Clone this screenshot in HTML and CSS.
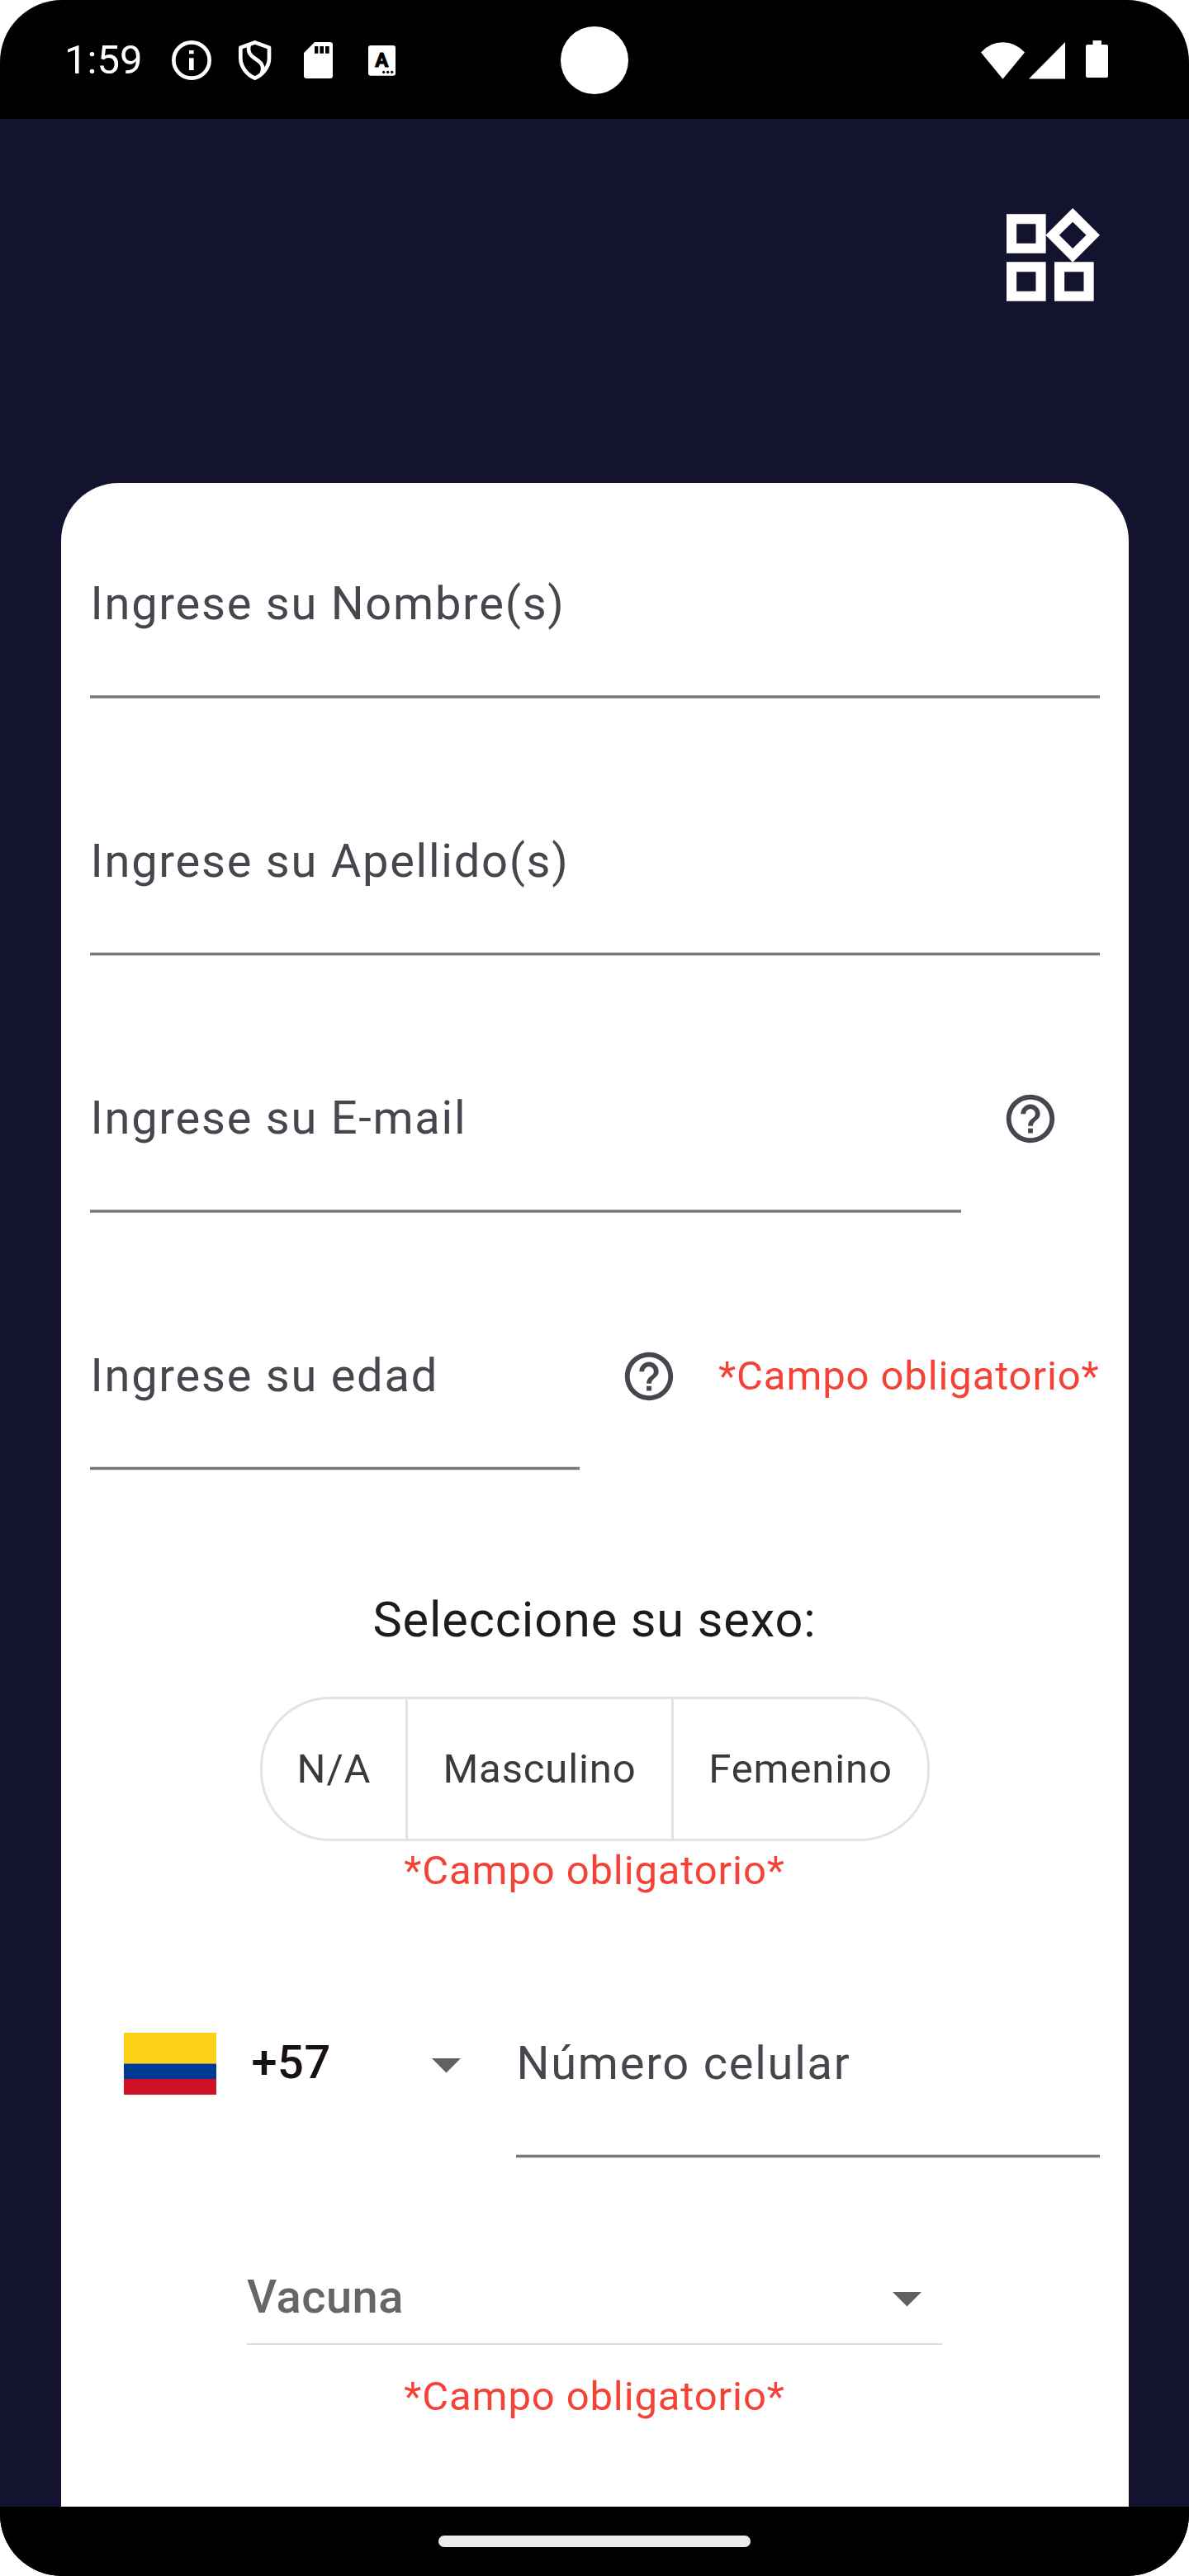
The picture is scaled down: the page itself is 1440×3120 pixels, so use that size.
FILE: index.html
```html
<!DOCTYPE html>
<html lang="es">
<head>
<meta charset="utf-8">
<title>Registro</title>
<link rel="stylesheet" href="styles.css">
</head>
<body>
<div class="screen">
  <header class="status">
    <span class="clock">1:59</span>
    <svg class="ic-info" viewBox="624 147 144 144"><circle cx="696" cy="219" r="65" fill="none" stroke="#fff" stroke-width="14"/><path fill="#fff" d="M687 183h17v13h-17zM687 211h17v44h-17z"/></svg>
    <svg class="ic-shield" viewBox="867 147 120 144"><g fill="none" stroke="#fff" stroke-width="14" stroke-linejoin="round"><path d="M926 154l52 19v38c0 33-24 61-52 73c-28-12-52-40-52-73v-38z"/><path d="M905 162C899 190 909 201 926 212C944 223 964 238 950 268"/></g></svg>
    <svg class="ic-sd" viewBox="1104 153 105 132"><path fill="#fff" fill-rule="evenodd" d="M1143 153h56q10 0 10 10v113q0 9-10 9h-85q-10 0-10-9v-84zM1143 168v26h13v-26zM1162 168v26h14v-26zM1182 168v26h14v-26z"/></svg>
    <svg class="ic-a" viewBox="1338 165 99 111"><rect x="1338" y="165" width="99" height="110" rx="9" fill="#fff"/><text class="glyph-a" x="1387" y="244">A</text><circle cx="1394" cy="262" r="5"/><circle cx="1409" cy="262" r="5"/><circle cx="1424" cy="262" r="5"/></svg>
    <span class="camera"></span>
    <svg class="ic-wifi" viewBox="0 0 53 45"><path fill="#fff" d="M0 12.500Q11 .3 26.500 .3T53 12.500L26.500 44.800z"/></svg>
    <svg class="ic-signal" viewBox="0 0 44 45"><path fill="#fff" d="M44 0v44.500H0z"/></svg>
    <svg class="ic-battery" viewBox="0 0 27 45"><path fill="#fff" d="M8.500 0h10.500v5h6q2 0 2 2v36q0 2-2 2h-23q-2 0-2-2v-36q0-2 2-2h6.500z"/></svg>
  </header>
  <main class="page">
    <div class="topbar">
      <svg class="ic-widgets" viewBox="117.500 96 339 339"><path fill="#fff" fill-rule="evenodd" d="M117.500 117.500h143v143h-143zM154 154v70h70v-70zM117.500 291.500h143v143h-143zM154 328v70h70v-70zM291.500 291.500h143v143h-143zM328 328v70h70v-70zM358 96l98.500 98.500-98.500 98.500-98.500-98.500zM358 146l-49 48.500 49 48.500 49-48.500z"/></svg>
    </div>
    <section class="card">
      <div class="row row-first">
        <div class="field thin"><label>Ingrese su Nombre(s)</label><i class="rule"></i></div>
      </div>
      <div class="row row-tall">
        <div class="field"><label>Ingrese su Apellido(s)</label><i class="rule"></i></div>
      </div>
      <div class="row row-short">
        <div class="field thin"><label>Ingrese su E-mail</label><i class="rule"></i></div>
        <svg class="help help-end" viewBox="0 0 24 24"><path d="M11 18h2v-2h-2v2zm1-16C6.480 2 2 6.480 2 12s4.480 10 10 10 10-4.480 10-10S17.520 2 12 2zm0 18c-4.410 0-8-3.590-8-8s3.590-8 8-8 8 3.590 8 8-3.590 8-8 8zm0-14c-2.210 0-4 1.790-4 4h2c0-1.100.9-2 2-2s2 .9 2 2c0 2-3 1.750-3 5h2c0-2.250 3-2.500 3-5 0-2.210-1.790-4-4-4z"/></svg>
      </div>
      <div class="row row-tall">
        <div class="field"><label>Ingrese su edad</label><i class="rule"></i></div>
        <svg class="help" viewBox="0 0 24 24"><path d="M11 18h2v-2h-2v2zm1-16C6.480 2 2 6.480 2 12s4.480 10 10 10 10-4.480 10-10S17.520 2 12 2zm0 18c-4.410 0-8-3.590-8-8s3.590-8 8-8 8 3.590 8 8-3.590 8-8 8zm0-14c-2.210 0-4 1.790-4 4h2c0-1.100.9-2 2-2s2 .9 2 2c0 2-3 1.750-3 5h2c0-2.250 3-2.500 3-5 0-2.210-1.790-4-4-4z"/></svg>
        <p class="required required-inline">*Campo obligatorio*</p>
      </div>
      <h2 class="question">Seleccione su sexo:</h2>
      <div class="segments">
        <span class="seg seg-na">N/A</span>
        <span class="seg seg-m">Masculino</span>
        <span class="seg seg-f">Femenino</span>
      </div>
      <p class="required required-sex">*Campo obligatorio*</p>
      <div class="row row-phone">
        <div class="country">
          <svg class="flag" viewBox="0 0 112 75"><path fill="#fcd116" d="M0 0h112v37.500H0z"/><path fill="#003893" d="M0 37.500h112V56H0z"/><path fill="#ce1126" d="M0 56h112v19H0z"/></svg>
          <span class="dial">+57</span>
          <svg class="arrow" viewBox="0 0 35 17.500"><path d="M0 0h35L17.500 17.500z"/></svg>
        </div>
        <div class="field"><label>Número celular</label><i class="rule"></i></div>
      </div>
      <div class="select">
        <span>Vacuna</span>
        <svg class="arrow" viewBox="0 0 35 17.500"><path d="M0 0h35L17.500 17.500z"/></svg>
      </div>
      <p class="required required-vaccine">*Campo obligatorio*</p>
    </section>
  </main>
  <footer class="navbar"><span class="pill"></span></footer>
</div>
</body>
</html>
```
FILE: styles.css
```css
* { box-sizing: border-box; }
body { margin: 0; background: #fff; font-family: Roboto, "Liberation Sans", sans-serif; }
svg { display: block; flex: none; }
p, h2 { margin: 0; }

.screen {
  width: 1440px; height: 3120px; border-radius: 75px; overflow: hidden;
  display: flex; flex-direction: column; background: #000;
}

.status { position: relative; height: 144px; padding: 2px 98px 0 78px; display: flex; align-items: center; color: #fff; }
.clock { width: 130px; font-size: 49px; line-height: 60px; }
.ic-info { width: 48px; height: 48px; }
.ic-shield { width: 40px; height: 48px; margin-left: 33px; }
.ic-sd { width: 35px; height: 44px; margin-left: 39px; }
.ic-a { width: 33px; height: 37px; margin-left: 43px; }
.glyph-a { font-size: 72px; font-weight: 700; text-anchor: middle; stroke: #000; stroke-width: 3px; stroke-linejoin: round; }
.camera { position: absolute; left: 679px; top: 32px; width: 82px; height: 82px; border-radius: 50%; background: #fff; }
.ic-wifi { width: 53px; height: 45px; margin-left: auto; }
.ic-signal { width: 44px; height: 45px; margin-left: 5px; }
.ic-battery { width: 27px; height: 45px; margin: 0 0 3px 25px; }

.page { flex: 1; min-height: 0; display: flex; flex-direction: column; background: #14132f; }
.topbar { height: 441px; flex: none; padding: 108px 108px 0 0; display: flex; justify-content: flex-end; }
.ic-widgets { width: 113px; height: 113px; }

.card { flex: 1; min-height: 0; margin: 0 73.5px; padding: 0 35px; border-radius: 70px 70px 0 0; background: #fff; }

.row { display: flex; align-items: flex-end; }
.row-first { height: 261px; }
.row-tall { height: 312px; }
.row-short { height: 311px; }
.row-phone { height: 313px; }

.field { flex: 1; min-width: 0; display: flex; flex-direction: column; gap: 68px; }
.field label { padding-left: 1px; font-size: 56px; line-height: 84px; letter-spacing: 1.75px; color: #49454f; white-space: nowrap; }
.rule { height: 5px; background: linear-gradient(#dedcdf 0 1px, #79747e 1px 4px, #dedcdf 4px 5px); }
.field.thin { gap: 69px; }
.thin .rule { height: 4px; background: linear-gradient(#9b979e 0 1px, #79747e 1px 3px, #9b979e 3px 4px); }

.help { width: 70px; height: 70px; margin: 0 0 79px 49px; fill: #49454f; }
.help-end { margin-right: 49px; }

.required { font-size: 49px; line-height: 70px; letter-spacing: .875px; color: #f44336; text-align: center; white-space: nowrap; }
.required-inline { margin: 0 0 79px 49px; }
.required-sex { margin-top: 1px; }
.required-vaccine { margin-top: 28px; }

.question { margin-top: 139px; font-size: 59.5px; font-weight: 400; line-height: 84px; letter-spacing: .875px; color: #1c1b1f; text-align: center; }

.segments { width: 811px; height: 175px; margin: 51px auto 0; border: 3.5px solid #e3e3e3; border-radius: 85px; display: flex; }
.seg { display: flex; align-items: center; justify-content: center; font-size: 49px; letter-spacing: .875px; color: #3a3a3a; }
.seg-na { width: 176px; padding-left: 1px; border-right: 3px solid #e3e3e3; }
.seg-m { width: 322px; padding-left: 1px; border-right: 3px solid #e3e3e3; }
.seg-f { flex: 1; padding-left: 1px; }

.country { width: 516px; flex: none; padding-left: 41.5px; display: flex; align-items: flex-end; }
.flag { width: 112px; height: 75px; margin-bottom: 77px; }
.dial { width: 218px; margin: 0 0 74px 42.5px; font-size: 56px; line-height: 84px; letter-spacing: .525px; font-weight: 500; color: #171112; }
.arrow { width: 35px; height: 17.5px; fill: #616161; }
.country .arrow { margin-bottom: 103.5px; }

.select { width: 842px; height: 100px; margin: 126px auto 0; padding-right: 25px; border-bottom: 2px solid #ddd; display: flex; justify-content: space-between; }
.select span { font-size: 56px; line-height: 84px; letter-spacing: .525px; font-weight: 500; color: #666; }
.select .arrow { margin-top: 36px; }

.navbar { height: 84px; flex: none; padding-top: 35px; background: #000; }
.pill { display: block; width: 378px; height: 14px; margin: 0 auto; border-radius: 7px; background: #ebebeb; }
```
